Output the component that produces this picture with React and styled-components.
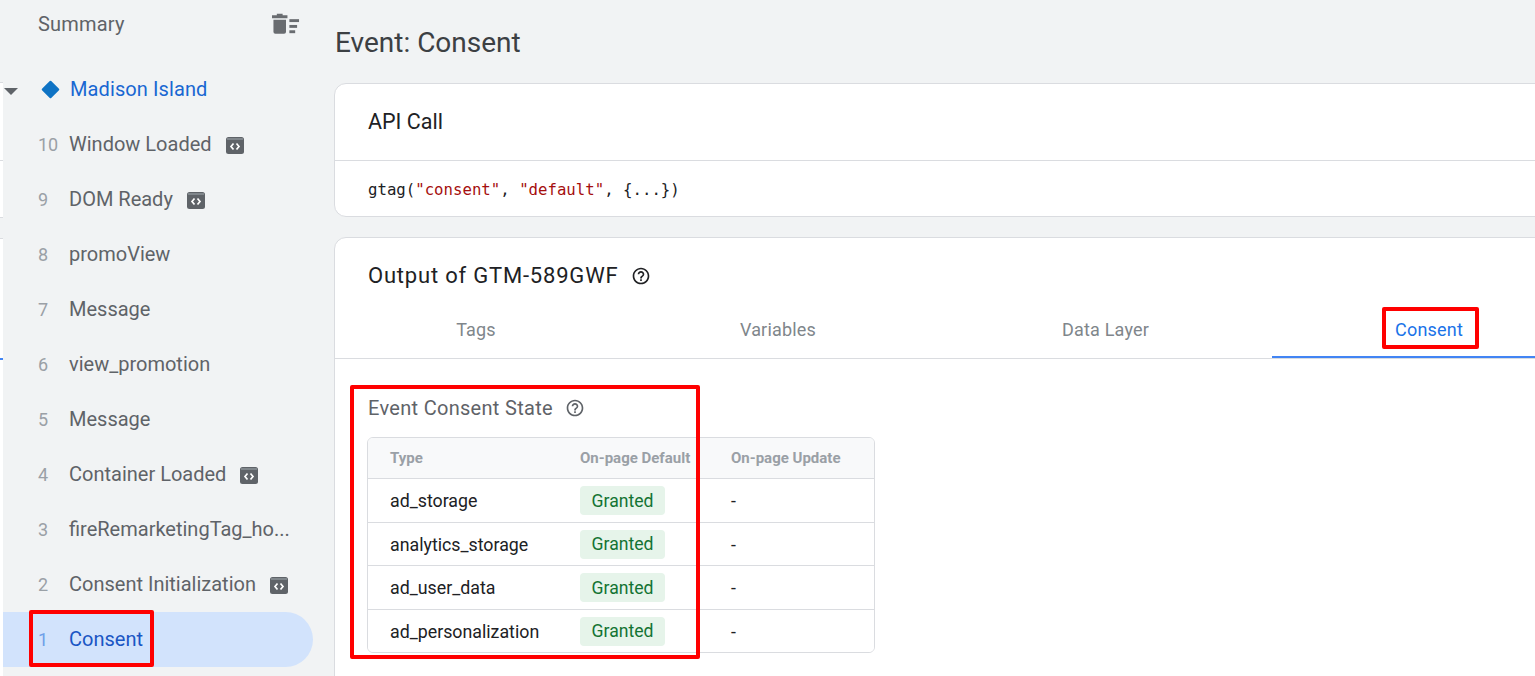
import React from "react";
import styled, { createGlobalStyle } from "styled-components";

const sans = `"Roboto", "Liberation Sans", sans-serif`;

const Global = createGlobalStyle`
html, body {
  margin: 0;
  padding: 0;
  overflow: hidden;
  background: #f1f3f4;
  font-family: ${sans};
}
`;

const Page = styled.div`
position: relative;
width: 1535px;
height: 676px;
display: flex;
overflow: hidden;
background: #f1f3f4;
`;

const Strip = styled.div`
flex: 0 0 3px;
display: flex;
flex-direction: column;
`;

const StripPart = styled.div`
height: ${(p) => p.$h}px;
flex: 0 0 auto;
background: ${(p) => p.$bg || "#fff"};
border-bottom: ${(p) => (p.$line ? `${p.$lineW || 1}px solid ${p.$line}` : "none")};
`;

const Sidebar = styled.aside`
flex: 0 0 331px;
display: flex;
flex-direction: column;
`;

const SummaryBar = styled.div`
height: 47px;
margin-bottom: 15px;
width: 297px;
padding-left: 35px;
box-sizing: border-box;
display: flex;
align-items: center;
justify-content: space-between;
font-size: 20px;
color: #5f6368;
letter-spacing: 0.2px;
`;

const Row = styled.div`
height: 55px;
width: 310px;
box-sizing: border-box;
padding: 0 0 1px 35px;
display: flex;
align-items: center;
font-size: 20px;
color: ${(p) => (p.$active ? "#1a56c4" : "#5f6368")};
background: ${(p) => (p.$active ? "#d2e3fc" : "transparent")};
border-radius: 0 28px 28px 0;
`;

const Num = styled.span`
flex: 0 0 31px;
font-size: 18px;
color: ${(p) => (p.$active ? "#6f9fe8" : "#9aa0a6")};
`;

const Label = styled.span`
white-space: nowrap;
`;

const Badge = styled.svg`
margin-left: 14px;
margin-top: 3px;
flex: 0 0 auto;
`;

const Diamond = styled.span`
width: 13px;
height: 13px;
margin: 0 13px 0 6px;
background: #0f73c4;
transform: rotate(45deg);
border-radius: 1px;
`;

const Container = styled.span`
color: #1967d2;
font-size: 20px;
letter-spacing: 0.1px;
font-weight: 400;
`;

const Caret = styled.span`
position: absolute;
left: 4px;
top: 88px;
width: 0;
height: 0;
border-left: 7px solid transparent;
border-right: 7px solid transparent;
border-top: 7px solid #5f6368;
`;

const Main = styled.main`
flex: 1;
min-width: 0;
overflow: hidden;
`;

const Title = styled.h1`
margin: 0;
height: 83px;
box-sizing: border-box;
padding: 24px 0 0 1px;
font-size: 28px;
line-height: 37px;
font-weight: 400;
color: #3c4043;
`;

const Card = styled.section`
width: 1320px;
box-sizing: border-box;
background: #fff;
border: 1px solid #dadce0;
border-radius: 12px;
margin-bottom: 20px;
`;

const CardHead = styled.div`
height: 77px;
box-sizing: border-box;
padding: 0 0 2px 33px;
display: flex;
align-items: center;
font-size: 21.5px;
color: #202124;
border-bottom: 1px solid #dadce0;
`;

const Code = styled.div`
height: 55px;
box-sizing: border-box;
padding: 1px 0 0 33px;
display: flex;
align-items: center;
font-family: "DejaVu Sans Mono", monospace;
font-size: 15.7px;
color: #202124;
white-space: pre;
`;

const Str = styled.span`
color: #a50e0e;
`;

const OutputHead = styled.div`
height: 65px;
box-sizing: border-box;
padding: 10px 0 0 33px;
display: flex;
align-items: center;
gap: 13px;
font-size: 22px;
letter-spacing: 0.8px;
color: #202124;
`;

const Tabs = styled.div`
display: grid;
grid-template-columns: 282px 322px 333px 314px;
height: 55px;
border-bottom: 1px solid #dadce0;
`;

const Tab = styled.div`
display: flex;
align-items: center;
justify-content: center;
box-sizing: border-box;
font-size: 18px;
letter-spacing: 0.2px;
color: ${(p) => (p.$active ? "#1a73e8" : "#80868b")};
border-bottom: 2px solid ${(p) => (p.$active ? "#4285f4" : "transparent")};
`;

const Panel = styled.div`
padding: 32px 0 40px 33px;
`;

const PanelHead = styled.div`
display: flex;
align-items: center;
gap: 12px;
height: 34px;
margin-bottom: 12px;
font-size: 20px;
letter-spacing: 0.3px;
color: #5f6368;
`;

const Table = styled.div`
width: 508px;
margin-left: -1px;
box-sizing: border-box;
border: 1px solid #dadce0;
border-radius: 6px;
overflow: hidden;
`;

const TableRow = styled.div`
display: grid;
grid-template-columns: 190px 151px 1fr;
align-items: center;
height: ${(p) => p.$h}px;
box-sizing: border-box;
padding-left: 22px;
border-bottom: ${(p) => (p.$last ? "none" : "1px solid #dadce0")};
background: ${(p) => (p.$head ? "#f8f9fa" : "#fff")};
font-size: 17.8px;
color: #202124;
`;

const Th = styled.span`
font-size: 15px;
font-weight: 700;
color: #9aa0a6;
white-space: nowrap;
`;

const Granted = styled.span`
display: flex;
align-items: center;
justify-content: center;
width: 85px;
height: 29px;
border-radius: 4px;
background: #e6f4ea;
color: #137333;
font-size: 17.6px;
`;

const RedBox = styled.div`
position: absolute;
left: ${(p) => p.$x}px;
top: ${(p) => p.$y}px;
width: ${(p) => p.$w}px;
height: ${(p) => p.$h}px;
box-sizing: border-box;
border: 4px solid #ff0000;
border-radius: 2px;
pointer-events: none;
`;

const events = [
  { n: 10, name: "Window Loaded", code: true },
  { n: 9, name: "DOM Ready", code: true },
  { n: 8, name: "promoView" },
  { n: 7, name: "Message" },
  { n: 6, name: "view_promotion" },
  { n: 5, name: "Message" },
  { n: 4, name: "Container Loaded", code: true },
  { n: 3, name: "fireRemarketingTag_ho..." },
  { n: 2, name: "Consent Initialization", code: true },
  { n: 1, name: "Consent", active: true },
];

const consent = ["ad_storage", "analytics_storage", "ad_user_data", "ad_personalization"];
const rowHeights = [44, 43, 44, 42];

function CodeBadge() {
  return (
    <Badge width="18" height="17" viewBox="0 0 18 17">
      <rect x="0" y="0" width="18" height="17" rx="2.5" fill="#5f6368" />
      <rect x="1" y="1" width="16" height="2" fill="#80868b" />
      <path d="M7.5 6.5 L5 9.5 L7.5 12.5 M10.5 6.5 L13 9.5 L10.5 12.5" fill="none" stroke="#fff" strokeWidth="1.7" />
    </Badge>
  );
}

function Help({ size, color }) {
  return (
    <svg width={size} height={size} viewBox="0 0 24 24" fill={color}>
      <path d="M11 18h2v-2h-2v2zm1-16C6.48 2 2 6.48 2 12s4.48 10 10 10 10-4.48 10-10S17.52 2 12 2zm0 18c-4.41 0-8-3.59-8-8s3.59-8 8-8 8 3.59 8 8-3.59 8-8 8zm0-14c-2.21 0-4 1.79-4 4h2c0-1.1.9-2 2-2s2 .9 2 2c0 2-3 1.75-3 5h2c0-2.25 3-2.5 3-5 0-2.21-1.79-4-4-4z" />
    </svg>
  );
}

function ClearIcon() {
  return (
    <svg width="28" height="24" viewBox="0 0 29 24" fill="#696c70">
      <path d="M5 1.5h6v1.5h5v3H0V3h5z" />
      <path d="M1.5 7.5h13V20a2 2 0 0 1-2 2h-9a2 2 0 0 1-2-2z" />
      <rect x="18" y="7" width="10" height="3" />
      <rect x="18" y="13" width="8" height="3" />
      <rect x="18" y="18.5" width="6" height="3" />
    </svg>
  );
}

export default function App() {
  return (
    <Page>
      <Global />
      <Strip>
        <StripPart $h={82} $bg="#f1f3f4" $line="#dadce0" />
        <StripPart $h={77} $line="#dadce0" />
        <StripPart $h={56} $line="#dadce0" />
        <StripPart $h={20} $bg="#f1f3f4" $line="#dadce0" />
        <StripPart $h={119} />
        <StripPart $h={2} $bg="#4285f4" />
        <StripPart $h={320} />
      </Strip>
      <Caret />
      <Sidebar>
        <SummaryBar>
          <span>Summary</span>
          <ClearIcon />
        </SummaryBar>
        <Row>
          <Diamond />
          <Container>Madison Island</Container>
        </Row>
        {events.map((e) => (
          <Row key={e.n} $active={e.active}>
            <Num $active={e.active}>{e.n}</Num>
            <Label>{e.name}</Label>
            {e.code && <CodeBadge />}
          </Row>
        ))}
      </Sidebar>
      <Main>
        <Title>Event: Consent</Title>
        <Card>
          <CardHead>API Call</CardHead>
          <Code>
            gtag(<Str>"consent"</Str>, <Str>"default"</Str>, {"{...}"})
          </Code>
        </Card>
        <Card>
          <OutputHead>
            Output of GTM-589GWF
            <Help size={20} color="#202124" />
          </OutputHead>
          <Tabs>
            <Tab>Tags</Tab>
            <Tab>Variables</Tab>
            <Tab>Data Layer</Tab>
            <Tab $active>Consent</Tab>
          </Tabs>
          <Panel>
            <PanelHead>
              Event Consent State
              <Help size={20} color="#5f6368" />
            </PanelHead>
            <Table>
              <TableRow $head $h={41}>
                <Th>Type</Th>
                <Th>On-page Default</Th>
                <Th>On-page Update</Th>
              </TableRow>
              {consent.map((c, i) => (
                <TableRow key={c} $h={rowHeights[i]} $last={i === consent.length - 1}>
                  <span>{c}</span>
                  <span><Granted>Granted</Granted></span>
                  <span>-</span>
                </TableRow>
              ))}
            </Table>
          </Panel>
        </Card>
      </Main>
      <RedBox $x={29} $y={610} $w={125} $h={57} />
      <RedBox $x={350} $y={385} $w={350} $h={274} />
      <RedBox $x={1382} $y={307} $w={97} $h={42} />
    </Page>
  );
}
